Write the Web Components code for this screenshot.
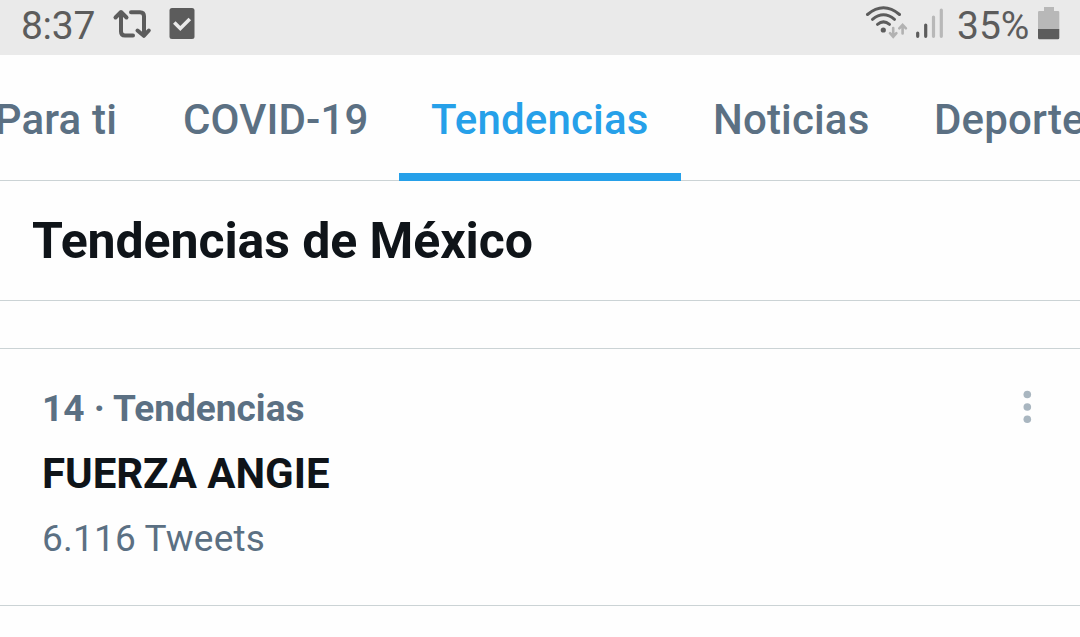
<!DOCTYPE html>
<html lang="es">
<head>
<meta charset="utf-8">
<title>Tendencias</title>
<style>
  body {
    margin: 0;
    background: #fefefe;
    font-family: Roboto, sans-serif;
    overflow: hidden;
  }
</style>
</head>
<body>
<trends-screen></trends-screen>

<script>
class StatusBar extends HTMLElement {
  constructor() {
    super();
    const shadow = this.attachShadow({ mode: 'open' });

    const template = document.createElement('template');
    template.innerHTML = `
      <style>
        :host {
          display: flex;
          justify-content: space-between;
          height: 55px;
          background-color: #eaeaea;
          color: #5c5c5c;
          font-size: 39px;
          line-height: 52px;
          white-space: nowrap;
        }

        .side {
          display: flex;
        }

        .time {
          width: 91px;
          padding-left: 21px;
          letter-spacing: -0.3px;
        }

        .battery {
          width: 73px;
        }

        svg {
          display: block;
          flex: none;
        }
      </style>

      <div class="side">
        <span class="time"><slot name="time"></slot></span>
        <svg width="90" height="55" viewBox="112 0 90 55" fill="none">
          <g stroke="#5c5c5c" stroke-width="4" stroke-linecap="round" stroke-linejoin="round">
            <path d="M115.500 17.500L121 12l5.500 5.500M121 13v18.500q0 4 4 4h8"/>
            <path d="M131 12.300h9q4 0 4 4V34M137.500 30.500l6.300 5.300 5-5.300"/>
          </g>
          <rect x="169.500" y="8" width="25" height="31" rx="2.500" fill="#5c5c5c"/>
          <path d="M174.300 22.500l6 6 9.500-9.500" stroke="#eaeaea" stroke-width="3.600"/>
        </svg>
      </div>
      <div class="side">
        <svg width="93" height="55" viewBox="864 0 93 55" fill="none" stroke-linecap="round">
          <g stroke="#5c5c5c" stroke-width="3">
            <path d="M867.500 14.500Q883.500 1 899.500 14.500"/>
            <path d="M872.500 19.300Q883.500 10.300 894.500 19.300"/>
            <path d="M877.500 24.300Q883.500 19.500 889.500 24.300"/>
          </g>
          <circle cx="883.300" cy="30" r="2.600" fill="#5c5c5c"/>
          <g stroke="#b2b2b2" stroke-width="2.600">
            <path d="M893.200 28v8M890 33.200l3.200 3.500 3.200-3.500"/>
            <path d="M902.600 33.500V25M899.300 28.300l3.300-3.500 3.300 3.500"/>
          </g>
          <g stroke-width="3.200">
            <path d="M917.700 33v3.300M925.700 25v11.300" stroke="#5c5c5c"/>
            <path d="M933.500 17v19.300M941.300 10v26.300" stroke="#b8b8b8"/>
          </g>
        </svg>
        <span class="battery"><slot name="battery"></slot></span>
        <svg width="50" height="55" viewBox="1030 0 50 55">
          <path d="M1044 7h10v4h4q1.300 0 1.300 1.300V29H1038V12.300q0-1.300 1.300-1.300h4.700z" fill="#b8b8b8"/>
          <path d="M1038 29h21.300v8.700q0 1.500-1.500 1.500h-18.300q-1.500 0-1.500-1.500z" fill="#5c5c5c"/>
        </svg>
      </div>
    `;

    shadow.appendChild(template.content.cloneNode(true));
  }
}

class TabItem extends HTMLElement {
  constructor() {
    super();
    const shadow = this.attachShadow({ mode: 'open' });

    const template = document.createElement('template');
    template.innerHTML = `
      <style>
        :host {
          display: flex;
          box-sizing: border-box;
          flex: none;
          height: 126px;
          padding: 0 34px 0 32px;
          border-bottom: 8px solid transparent;
          color: #5b7083;
          font-size: 42px;
          font-weight: 500;
          line-height: 129px;
          letter-spacing: 0.15px;
          white-space: nowrap;
        }

        :host([active]) {
          color: #26a0e9;
          border-bottom-color: #26a0e9;
        }
      </style>
      <slot></slot>
    `;

    shadow.appendChild(template.content.cloneNode(true));
  }
}

class TabBar extends HTMLElement {
  constructor() {
    super();
    const shadow = this.attachShadow({ mode: 'open' });

    const template = document.createElement('template');
    template.innerHTML = `
      <style>
        :host {
          display: grid;
          grid-template-columns: 151px 248px 282px 221px 178px;
          height: 126px;
          overflow: hidden;
          background: linear-gradient(#cbd3d5, #cbd3d5) bottom / 100% 1px no-repeat;
        }

        /* the first tab is scrolled partly off the left edge */
        ::slotted(:first-child) {
          justify-self: end;
        }
      </style>
      <slot></slot>
    `;

    shadow.appendChild(template.content.cloneNode(true));
  }
}

class SectionHeader extends HTMLElement {
  constructor() {
    super();
    const shadow = this.attachShadow({ mode: 'open' });

    const template = document.createElement('template');
    template.innerHTML = `
      <style>
        :host {
          display: block;
          height: 119px;
          border-bottom: 1px solid #cbd3d5;
        }

        h1 {
          margin: 0;
          padding-left: 32px;
          color: #0f1419;
          font-size: 50px;
          font-weight: 700;
          line-height: 121px;
          letter-spacing: -0.08px;
          white-space: nowrap;
        }
      </style>
      <h1><slot></slot></h1>
    `;

    shadow.appendChild(template.content.cloneNode(true));
  }
}

class TrendItem extends HTMLElement {
  constructor() {
    super();
    const shadow = this.attachShadow({ mode: 'open' });

    const template = document.createElement('template');
    template.innerHTML = `
      <style>
        :host {
          display: flex;
          justify-content: space-between;
          box-sizing: border-box;
          height: 258px;
          padding: 36px 47px 0 42px;
          border-top: 1px solid #cbd3d5;
          border-bottom: 1px solid #cbd3d5;
          color: #5b7083;
          font-size: 37px;
          white-space: nowrap;
        }

        .text {
          display: grid;
          grid-template-rows: 48px 82px 48px;
        }

        .context {
          font-weight: 700;
          line-height: 48px;
        }

        .name {
          color: #0f1419;
          font-size: 42px;
          font-weight: 700;
          line-height: 82px;
          letter-spacing: -0.05px;
        }

        .count {
          line-height: 48px;
          letter-spacing: 0.2px;
        }

        svg {
          display: block;
          margin-top: 4px;
        }
      </style>
      <div class="text">
        <span class="context"><slot name="context"></slot></span>
        <span class="name"><slot name="name"></slot></span>
        <span class="count"><slot name="count"></slot></span>
      </div>
      <svg width="12" height="40" viewBox="0 0 12 40" fill="#a9b6c0">
        <circle cx="6.300" cy="5.500" r="3.800"/>
        <circle cx="6.300" cy="18" r="3.800"/>
        <circle cx="6.300" cy="30.300" r="3.800"/>
      </svg>
    `;

    shadow.appendChild(template.content.cloneNode(true));
  }
}

class TrendsScreen extends HTMLElement {
  constructor() {
    super();
    const shadow = this.attachShadow({ mode: 'open' });

    const template = document.createElement('template');
    template.innerHTML = `
      <style>
        :host {
          display: flex;
          flex-direction: column;
          width: 1080px;
          height: 637px;
          overflow: hidden;
        }

        trend-item {
          margin-top: 47px;
        }
      </style>
      <status-bar>
        <span slot="time">8:37</span>
        <span slot="battery">35%</span>
      </status-bar>
      <tab-bar>
        <tab-item>Para ti</tab-item>
        <tab-item>COVID-19</tab-item>
        <tab-item active>Tendencias</tab-item>
        <tab-item>Noticias</tab-item>
        <tab-item>Deportes</tab-item>
      </tab-bar>
      <section-header>Tendencias de México</section-header>
      <trend-item>
        <span slot="context">14 · Tendencias</span>
        <span slot="name">FUERZA ANGIE</span>
        <span slot="count">6.116 Tweets</span>
      </trend-item>
    `;

    shadow.appendChild(template.content.cloneNode(true));
  }
}

customElements.define('status-bar', StatusBar);
customElements.define('tab-item', TabItem);
customElements.define('tab-bar', TabBar);
customElements.define('section-header', SectionHeader);
customElements.define('trend-item', TrendItem);
customElements.define('trends-screen', TrendsScreen);
</script>
</body>
</html>
